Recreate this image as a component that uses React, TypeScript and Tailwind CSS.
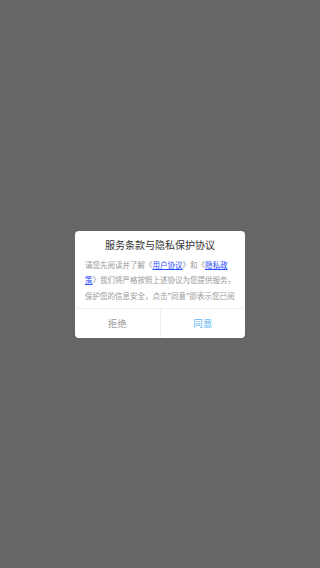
import React from 'react';

export default function App() {
  return (
    <div
      className="w-[320px] h-[568px] bg-[#666666] flex items-center justify-center"
      style={{ fontFamily: '"Noto Sans CJK SC", "Noto Sans", sans-serif' }}
    >
      <div className="w-[170px] bg-white rounded-[4px] overflow-hidden flex flex-col">
        <div className="pt-[7px] h-[21px] text-center text-[10px] leading-[14px] text-[#333333]">
          服务条款与隐私保护协议
        </div>
        <div className="mt-[5px] mb-[4px] h-[47px] overflow-hidden px-[10px] text-[7.5px] leading-[15.5px] text-[#9a9a9a]">
          请您先阅读并了解《<span className="text-[#2a4dff] underline">用户协议</span>》和《
          <span className="text-[#2a4dff] underline">隐私政策</span>》我们将严格按照上述协议为您提供服务，保护您的信息安全，点击"同意"即表示您已阅读并同意全部条款。
        </div>
        <div className="flex h-[30px] border-t border-[#f0f0f0]">
          <button className="flex-1 flex items-center justify-center text-[9.5px] text-[#999999]">
            拒绝
          </button>
          <div className="w-px bg-[#f0f0f0]" />
          <button className="flex-1 flex items-center justify-center text-[9.5px] text-[#5cb6f4]">
            同意
          </button>
        </div>
      </div>
    </div>
  );
}
